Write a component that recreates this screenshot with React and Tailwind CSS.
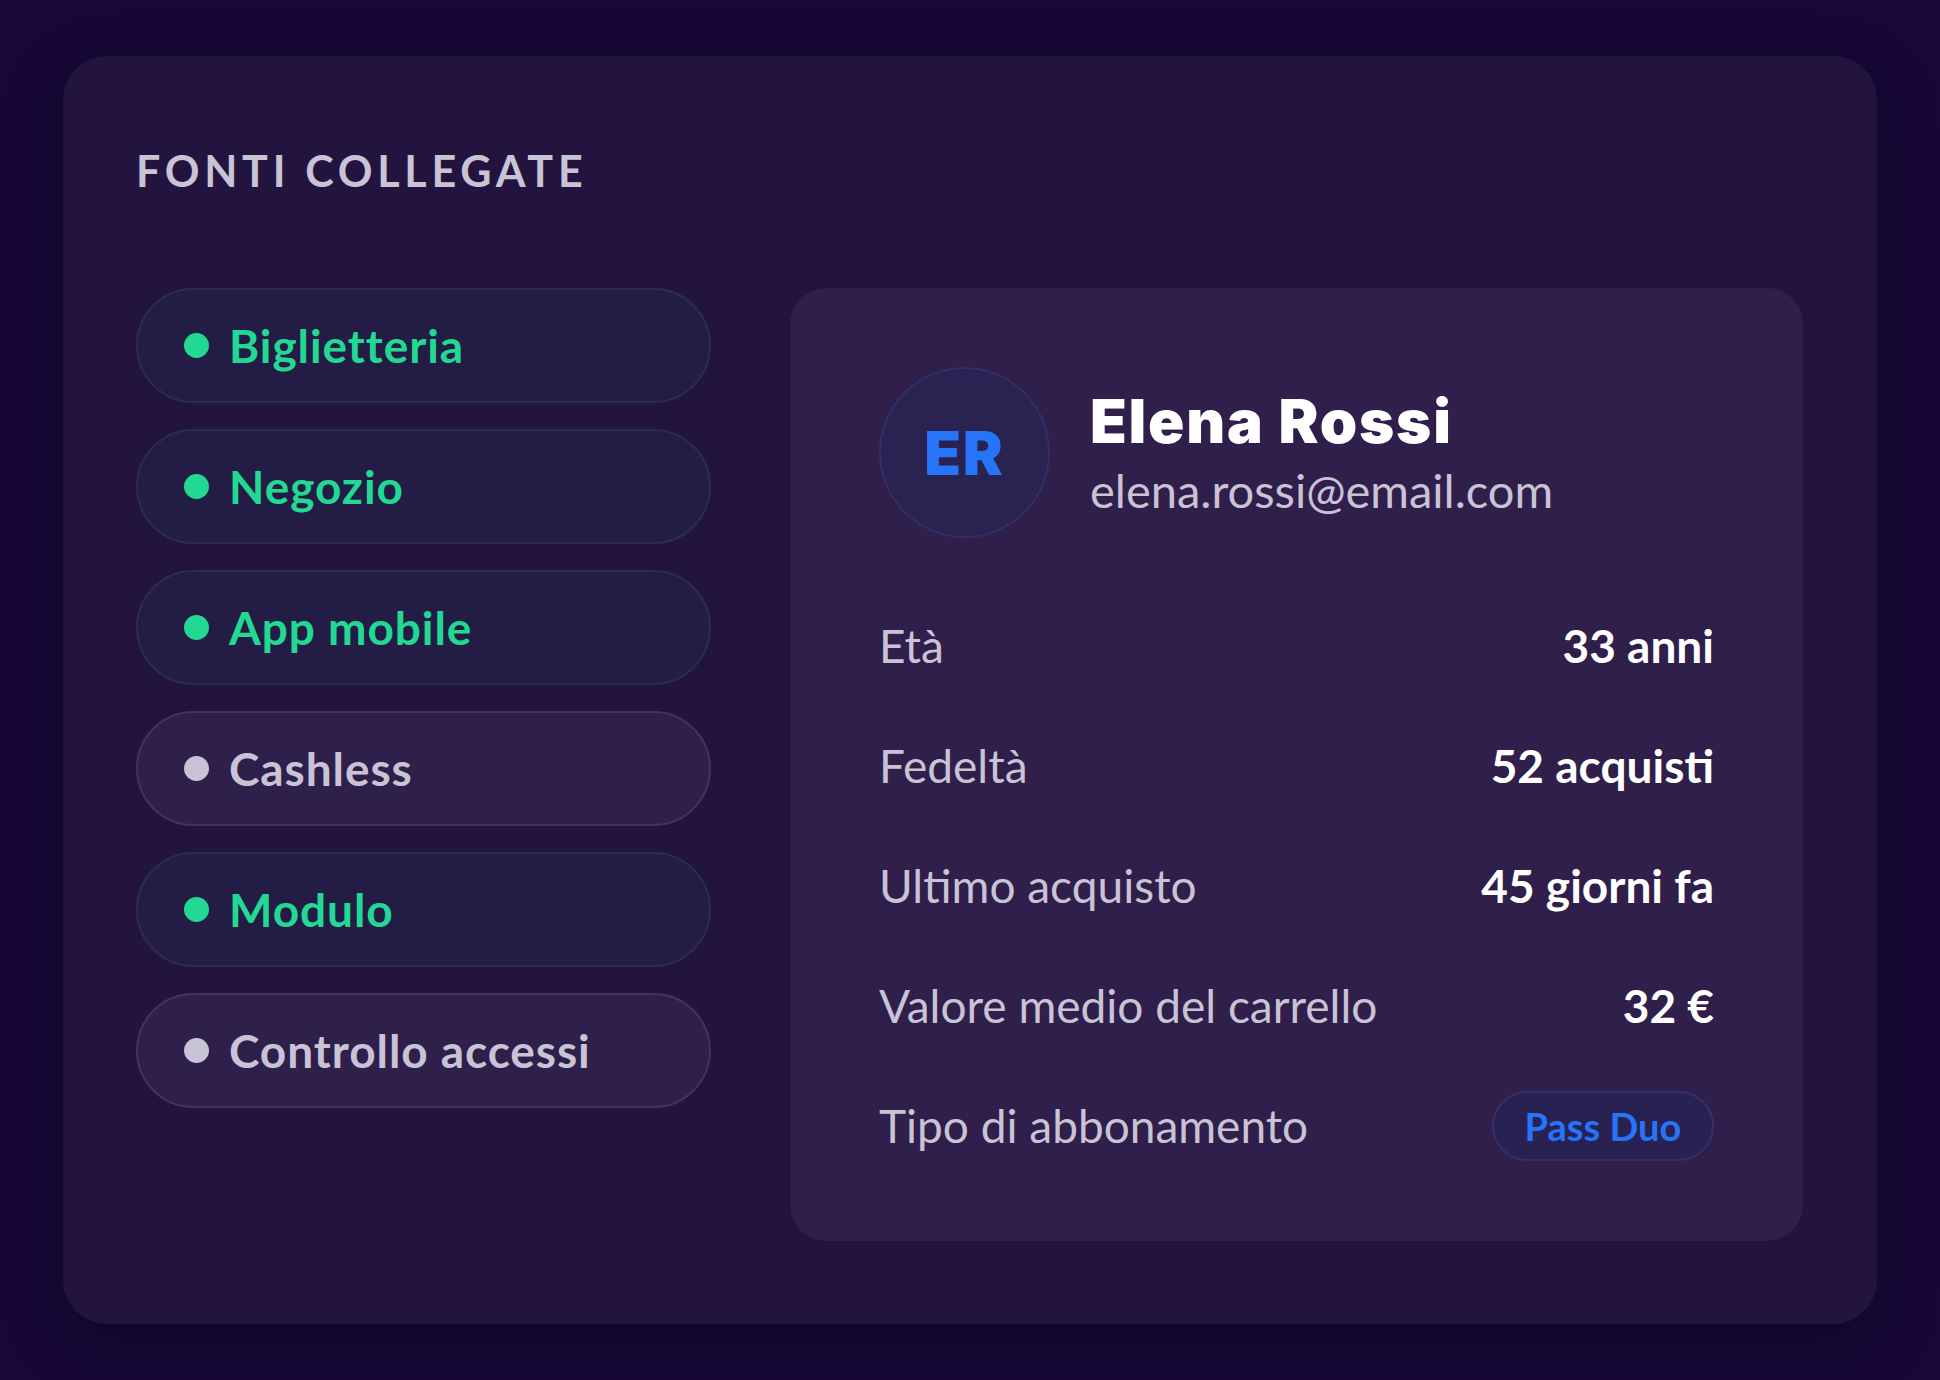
// App.jsx
const sources = [
  { label: "Biglietteria", active: true },
  { label: "Negozio", active: true },
  { label: "App mobile", active: true },
  { label: "Cashless", active: false },
  { label: "Modulo", active: true },
  { label: "Controllo accessi", active: false },
];

const details = [
  { label: "Età", value: "33 anni" },
  { label: "Fedeltà", value: "52 acquisti" },
  { label: "Ultimo acquisto", value: "45 giorni fa" },
  { label: "Valore medio del carrello", value: "32 €" },
];

function SourcePill({ label, active }) {
  return (
    <div
      className={`flex h-[115px] items-center gap-[20px] rounded-full border-2 pl-[46px] ${
        active ? "border-[#2a2d50] bg-[#231d46]" : "border-[#43335e] bg-[#2f1f4b]"
      }`}
    >
      <span className={`h-[25px] w-[25px] rounded-full ${active ? "bg-[#22d993]" : "bg-[#c9c3d6]"}`}></span>
      <span
        className={`text-[46px] font-bold leading-none tracking-[0.02em] ${
          active ? "text-[#22d993]" : "text-[#c9c3d6]"
        }`}
      >
        {label}
      </span>
    </div>
  );
}

function DetailRow({ label, children }) {
  return (
    <div className="flex h-[120px] items-center justify-between">
      <span className="text-[46px] font-normal leading-none text-[#c9c3d6]">{label}</span>
      {children}
    </div>
  );
}

export default function App() {
  return (
    <div className="min-h-screen bg-[#170837] px-[63px] py-[56px] font-['Lato','Noto_Sans',sans-serif]">
      <div className="rounded-[44px] bg-[#22143f] pt-[93px] pb-[83px] pl-[73px] pr-[74px] shadow-[0_20px_60px_rgba(0,0,0,0.25)]">
        <h2 className="text-[43px] font-bold uppercase leading-none tracking-[0.11em] text-[#c9c3d6]">
          Fonti collegate
        </h2>

        <div className="mt-[96px] flex gap-[79px]">
          {/* sources */}
          <div className="flex w-[575px] flex-col gap-[26px]">
            {sources.map((s) => (
              <SourcePill key={s.label} label={s.label} active={s.active} />
            ))}
          </div>

          {/* profile card */}
          <div className="h-[953px] w-[1013px] rounded-[36px] bg-[#2f1f4a] px-[89px] pt-[79px]">
            <div className="flex items-center gap-[40px]">
              <div className="flex h-[171px] w-[171px] items-center justify-center rounded-full border-2 border-[#2f3066] bg-[#2a2251]">
                <span className="font-['Inter',sans-serif] text-[60px] font-black leading-none tracking-[0.03em] text-[#2674f8]">
                  ER
                </span>
              </div>
              <div>
                <div className="font-['Inter',sans-serif] text-[60px] font-black leading-none tracking-[0.03em] text-white">
                  Elena Rossi
                </div>
                <div className="mt-[16px] text-[47px] font-normal leading-none text-[#c9c3d6]">
                  elena.rossi@email.com
                </div>
              </div>
            </div>

            <div className="mt-[48px] flex flex-col">
              {details.map((d) => (
                <DetailRow key={d.label} label={d.label}>
                  <span className="text-[46px] font-bold leading-none text-white">{d.value}</span>
                </DetailRow>
              ))}
              <DetailRow label="Tipo di abbonamento">
                <span className="flex h-[70px] w-[222px] items-center justify-center rounded-full border-2 border-[#33306a] bg-[#2a2153] text-[38px] font-bold leading-none text-[#2674f8]">
                  Pass Duo
                </span>
              </DetailRow>
            </div>
          </div>
        </div>
      </div>
    </div>
  );
}
